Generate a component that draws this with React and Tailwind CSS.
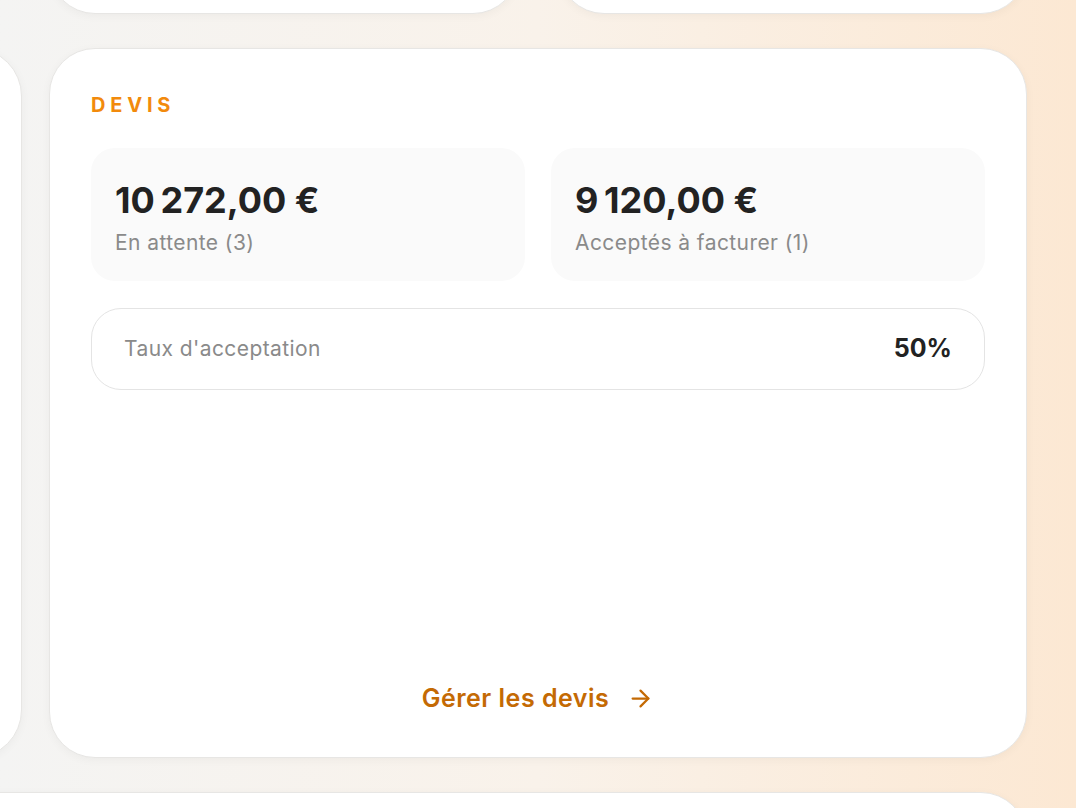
import React from 'react';
import { ArrowRight } from 'lucide-react';

const stats = [
  { amount: '10\u202f272,00\u00a0€', label: 'En attente (3)' },
  { amount: '9\u202f120,00\u00a0€', label: 'Acceptés à facturer (1)' },
];

const cardBase =
  'rounded-[46px] border border-[#e7e6e4] bg-white shadow-[0_2px_10px_rgba(0,0,0,0.04)]';

function StatTile({ amount, label }) {
  return (
    <div className="flex h-[133px] flex-col justify-center rounded-[24px] bg-[#fafafa] px-6 pt-[6px]">
      <div className="text-[36px] font-bold leading-tight tracking-[-0.02em] text-[#222222]">
        {amount}
      </div>
      <div className="mt-[6px] text-[21px] leading-7 tracking-[0.02em] text-[#8a8a8a]">{label}</div>
    </div>
  );
}

function QuotesCard() {
  return (
    <section className={`${cardBase} flex h-[710px] flex-1 flex-col px-[41px] pt-[43px] pb-[41px]`}>
      <h2 className="text-[20px] font-bold uppercase leading-[27px] tracking-[0.24em] text-[#f28a0c]">
        Devis
      </h2>

      <div className="mt-[29px] grid grid-cols-2 gap-[26px]">
        {stats.map((s) => (
          <StatTile key={s.label} amount={s.amount} label={s.label} />
        ))}
      </div>

      <div className="mt-[27px] flex h-[82px] items-center justify-between rounded-[30px] border border-[#e4e4e4] px-[32px]">
        <span className="text-[21px] tracking-[0.02em] text-[#8a8a8a]">Taux d'acceptation</span>
        <span className="text-[25px] font-bold text-[#222222]">50%</span>
      </div>

      <a
        href="#"
        className="mt-auto flex items-center justify-center gap-[18px] text-[25px] font-semibold leading-9 tracking-[0.02em] text-[#c46a04]"
      >
        Gérer les devis
        <ArrowRight size={27} strokeWidth={2} />
      </a>
    </section>
  );
}

export default function App() {
  return (
    <div className="h-[808px] w-full overflow-hidden bg-linear-to-r from-[#f4f4f3] via-[#f9f2ea] to-[#fce8d3] font-['Inter',sans-serif]">
      <div className="-mt-[186px] flex flex-col gap-[34px] pr-[49px]">
        {/* previous row */}
        <div className="grid grid-cols-2 gap-[39px] pl-[49px]">
          <div className={`${cardBase} h-[200px]`} />
          <div className={`${cardBase} h-[200px]`} />
        </div>

        <div className="-ml-[278px] flex gap-[27px]">
          <div className={`${cardBase} h-[710px] w-[300px] shrink-0 rounded-[48px]`} />
          <QuotesCard />
        </div>

        {/* next row */}
        <div className={`${cardBase} -ml-[60px] h-[200px]`} />
      </div>
    </div>
  );
}
